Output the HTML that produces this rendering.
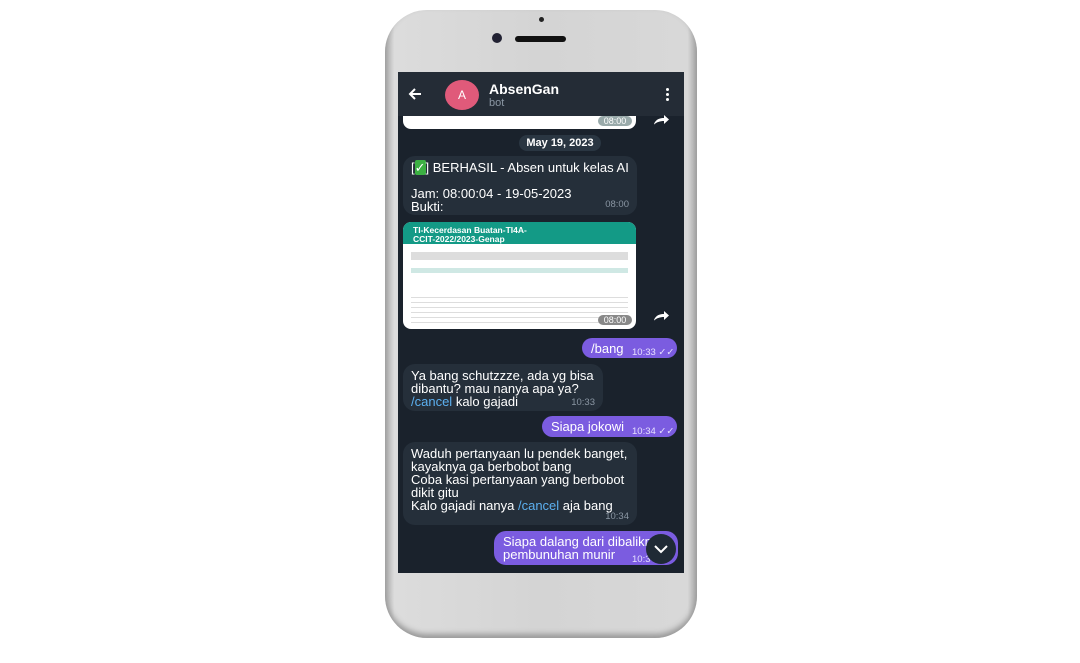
<!DOCTYPE html>
<html><head><style>
*{margin:0;padding:0;box-sizing:border-box}
body{width:1080px;height:663px;background:#fff;position:relative;overflow:hidden;font-family:"Liberation Sans",sans-serif}
.phone{position:absolute;left:385px;top:10px;width:312px;height:628px;border-radius:42px;background:linear-gradient(90deg,#a9a9a9 0%,#dcdcdc 3%,#d4d4d4 50%,#d8d8d8 97%,#a5a5a5 100%);box-shadow:inset 0 -4px 6px #999}
.screen{position:absolute;left:398px;top:72px;width:286px;height:501px;background:#1a222c;overflow:hidden}
.hdr{position:absolute;left:0;top:0;width:286px;height:44px;background:#242c36;color:#fff}
.bin{position:absolute;background:#252f3a;border-radius:12px;color:#fff;font-size:13px;line-height:13px;white-space:nowrap}
.bout{position:absolute;border-radius:12px;color:#fff;font-size:13px;line-height:13px;background:#7b5ce0;white-space:nowrap}
.t{position:absolute;font-size:9.5px;color:#8a96a3}
.to{position:absolute;font-size:9.5px;color:#e6e0ff}
a{color:#5cb0f0;text-decoration:none}
</style></head><body>
<div class="phone"></div>
<div style="position:absolute;left:539px;top:17px;width:5px;height:5px;border-radius:50%;background:#222"></div>
<div style="position:absolute;left:492px;top:33px;width:10px;height:10px;border-radius:50%;background:#223"></div>
<div style="position:absolute;left:515px;top:36px;width:51px;height:6px;border-radius:3px;background:#111"></div>
<div class="screen">
 <div class="hdr">
  <svg style="position:absolute;left:10px;top:15px" width="14" height="14" viewBox="0 0 14 14"><path d="M13 7H2M7 2L2 7l5 5" stroke="#fff" stroke-width="2" fill="none"/></svg>
  <div style="position:absolute;left:47px;top:8px;width:34px;height:30px;border-radius:50%;background:#e05a7a;text-align:center;line-height:30px;font-size:12px">A</div>
  <div style="position:absolute;left:91px;top:9px;font-size:14px;font-weight:bold">AbsenGan</div>
  <div style="position:absolute;left:91px;top:25px;font-size:11px;color:#8a96a3">bot</div>
  <div style="position:absolute;left:268px;top:16px;width:3px;height:3px;background:#fff;border-radius:50%;box-shadow:0 5px #fff,0 10px #fff"></div>
 </div>
 <div style="position:absolute;left:5px;top:44px;width:233px;height:13px;background:#fff;border-radius:0 0 8px 8px"></div>
 <div style="position:absolute;left:200px;top:44px;width:34px;height:10px;background:#9aa;border-radius:5px;font-size:9px;color:#fff;text-align:center">08:00</div>
 <svg style="position:absolute;left:250px;top:38px" width="24" height="22" viewBox="0 0 24 22"><path d="M6 14c2-5 6-6 10-6V5l5 4.5-5 4.5v-3c-4 0-7 1-10 3.5z" fill="#fff"/></svg>
 <div style="position:absolute;left:121px;top:63px;width:82px;height:16px;border-radius:8px;background:#2a3642;color:#fff;font-size:11px;font-weight:bold;text-align:center;line-height:16px">May 19, 2023</div>
 <div class="bin" style="left:5px;top:84px;width:234px;height:59px;padding:5px 8px">[<span style="background:#3cb043;border-radius:2px">✓</span>] BERHASIL - Absen untuk kelas AI<br><br>Jam: 08:00:04 - 19-05-2023<br>Bukti:<span class="t" style="right:8px;bottom:4px">08:00</span></div>
 <div style="position:absolute;left:5px;top:150px;width:233px;height:107px;background:#fff;border-radius:8px;overflow:hidden">
  <div style="height:22px;background:#139a86;color:#fff;font-size:8.5px;padding:4px 10px;line-height:9px;font-weight:bold">TI-Kecerdasan Buatan-TI4A-<br>CCIT-2022/2023-Genap</div>
  <div style="margin:8px 8px;height:8px;background:#ddd"></div>
  <div style="margin:6px 8px;height:5px;background:#cfe8e4"></div>
  <div style="margin:20px 8px 0;height:30px;background:repeating-linear-gradient(#fff 0 4px,#ddd 4px 5px)"></div>
 </div>
 <div style="position:absolute;left:200px;top:243px;width:34px;height:10px;background:#888;border-radius:5px;font-size:9px;color:#fff;text-align:center">08:00</div>
 <svg style="position:absolute;left:250px;top:234px" width="24" height="22" viewBox="0 0 24 22"><path d="M6 14c2-5 6-6 10-6V5l5 4.5-5 4.5v-3c-4 0-7 1-10 3.5z" fill="#fff"/></svg>
 <div class="bout" style="left:184px;top:266px;width:95px;height:20px;padding:4px 9px">/bang<span class="to" style="left:50px;top:8px">10:33 ✓✓</span></div>
 <div class="bin" style="left:5px;top:292px;width:200px;height:47px;padding:5px 8px">Ya bang schutzzze, ada yg bisa<br>dibantu? mau nanya apa ya?<br><a>/cancel</a> kalo gajadi<span class="t" style="right:8px;bottom:2px">10:33</span></div>
 <div class="bout" style="left:144px;top:344px;width:135px;height:21px;padding:4px 9px">Siapa jokowi<span class="to" style="left:90px;top:9px">10:34 ✓✓</span></div>
 <div class="bin" style="left:5px;top:370px;width:234px;height:83px;padding:5px 8px">Waduh pertanyaan lu pendek banget,<br>kayaknya ga berbobot bang<br>Coba kasi pertanyaan yang berbobot<br>dikit gitu<br>Kalo gajadi nanya <a>/cancel</a> aja bang<span class="t" style="right:8px;bottom:2px">10:34</span></div>
 <div class="bout" style="left:96px;top:459px;width:184px;height:34px;padding:4px 9px;overflow:hidden">Siapa dalang dari dibalikn<br>pembunuhan munir<span class="to" style="left:138px;top:22px">10:3</span></div>
 <div style="position:absolute;left:248px;top:462px;width:30px;height:30px;border-radius:50%;background:#1f2a35"><svg width="30" height="30" viewBox="0 0 30 30"><path d="M9 12l6 6 6-6" stroke="#fff" stroke-width="2" fill="none"/></svg></div>
</div>
</body></html>
